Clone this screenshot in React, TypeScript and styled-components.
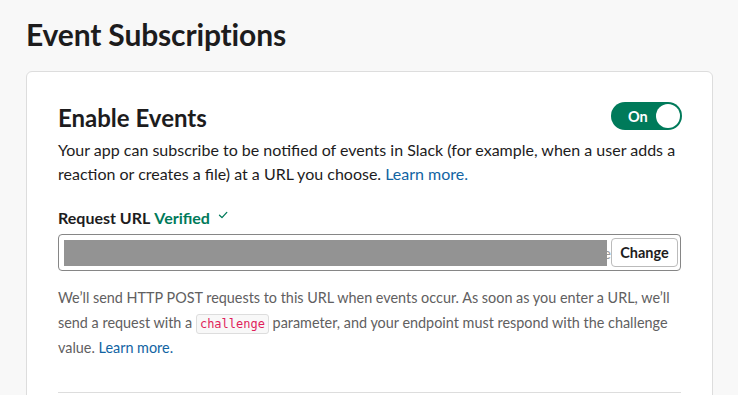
import React from "react";
import styled, { createGlobalStyle } from "styled-components";

const Global = createGlobalStyle`
  html, body { margin: 0; padding: 0; background: #f8f8f8; }
  body { font-family: Lato, "Noto Sans", sans-serif; color: #1d1c1d; -webkit-font-smoothing: antialiased; }
`;

const Page = styled.div`
  padding: 14px 25px 0 26px;
  height: 395px;
  overflow: hidden;
  box-sizing: border-box;
`;

const Title = styled.h1`
  margin: 0 0 17px 0;
  font-size: 30px;
  line-height: 40px;
  font-weight: 700;
  color: #1d1c1d;
  letter-spacing: -0.15px;
`;

const Card = styled.section`
  background: #fff;
  border: 1px solid #dddddd;
  border-radius: 6px;
  padding: 28px 31px 0 31px;
  min-height: 400px;
`;

const HeadRow = styled.div`
  display: flex;
  align-items: flex-start;
  justify-content: space-between;
`;

const Heading = styled.h2`
  margin: 0;
  font-size: 24px;
  line-height: 36px;
  font-weight: 700;
`;

const Toggle = styled.button`
  display: flex;
  align-items: center;
  justify-content: space-between;
  width: 71px;
  height: 28px;
  margin-top: 2px;
  margin-right: -1px;
  box-sizing: border-box;
  padding: 0 2px 0 17px;
  border: none;
  border-radius: 14px;
  background: #007a5a;
  color: #fff;
  font-family: Lato, sans-serif;
  font-weight: 700;
  font-size: 14.5px;
`;

const Knob = styled.span`
  width: 24px;
  height: 24px;
  border-radius: 50%;
  background: #fff;
`;

const Body = styled.p`
  margin: 2px 0 0 0;
  font-size: 16px;
  line-height: 24px;
`;

const Link = styled.a`
  color: #1264a3;
  text-decoration: none;
`;

const Label = styled.div`
  margin-top: 21px;
  display: flex;
  align-items: center;
  gap: 4px;
  font-size: 16px;
  line-height: 22px;
  font-weight: 700;
`;

const Verified = styled.span`
  color: #007a5a;
`;

const InputBox = styled.div`
  margin-top: 5px;
  display: flex;
  align-items: center;
  height: 37px;
  box-sizing: border-box;
  border: 1px solid #868686;
  border-radius: 4px;
  padding: 0 2px 0 5px;
`;

const Redacted = styled.span`
  flex: 1;
  height: 26px;
  background: #939393;
`;

const Tail = styled.span`
  width: 4px;
  overflow: hidden;
  font-size: 15px;
  color: #9a9a9a;
  direction: rtl;
  white-space: nowrap;
`;

const ChangeBtn = styled.button`
  height: 29px;
  width: 67px;
  box-sizing: border-box;
  border: 1px solid #bbbbbb;
  border-radius: 4px;
  background: #fff;
  font-family: Lato, sans-serif;
  font-weight: 700;
  font-size: 14.5px;
  color: #1d1c1d;
  padding: 0;
`;

const Help = styled.p`
  margin: 14px 0 0 0;
  font-size: 14.4px;
  line-height: 25px;
  color: #616061;
`;

const Code = styled.code`
  display: inline-block;
  line-height: 18px;
  font-family: "DejaVu Sans Mono", monospace;
  font-size: 12px;
  color: #e01e5a;
  background: #f8f8f8;
  border: 1px solid #dddddd;
  border-radius: 3px;
  padding: 0 3px;
`;

const Divider = styled.hr`
  margin: 32px 0 0 0;
  border: none;
  border-top: 1px solid #dddddd;
`;

const Check = () => (
  <svg width="10" height="10" viewBox="0 0 10 10" fill="none" style={{ marginLeft: 4, marginTop: -6 }}>
    <path d="M1.5 5.2 L4 7.6 L8.8 2.4" stroke="#007a5a" strokeWidth="1.3" strokeLinecap="round" strokeLinejoin="round" />
  </svg>
);

export default function App() {
  return (
    <>
      <Global />
      <Page>
        <Title>Event Subscriptions</Title>
        <Card>
          <HeadRow>
            <Heading>Enable Events</Heading>
            <Toggle>
              On
              <Knob />
            </Toggle>
          </HeadRow>
          <Body>
            Your app can subscribe to be notified of events in Slack (for example, when a user adds a
            reaction or creates a file) at a URL you choose. <Link href="#">Learn more.</Link>
          </Body>
          <Label>
            Request URL <Verified>Verified</Verified>
            <Check />
          </Label>
          <InputBox>
            <Redacted />
            <Tail>e</Tail>
            <ChangeBtn>Change</ChangeBtn>
          </InputBox>
          <Help>
            We’ll send HTTP POST requests to this URL when events occur. As soon as you enter a URL, we’ll
            send a request with a <Code>challenge</Code> parameter, and your endpoint must respond with the challenge
            value. <Link href="#">Learn more.</Link>
          </Help>
          <Divider />
        </Card>
      </Page>
    </>
  );
}
